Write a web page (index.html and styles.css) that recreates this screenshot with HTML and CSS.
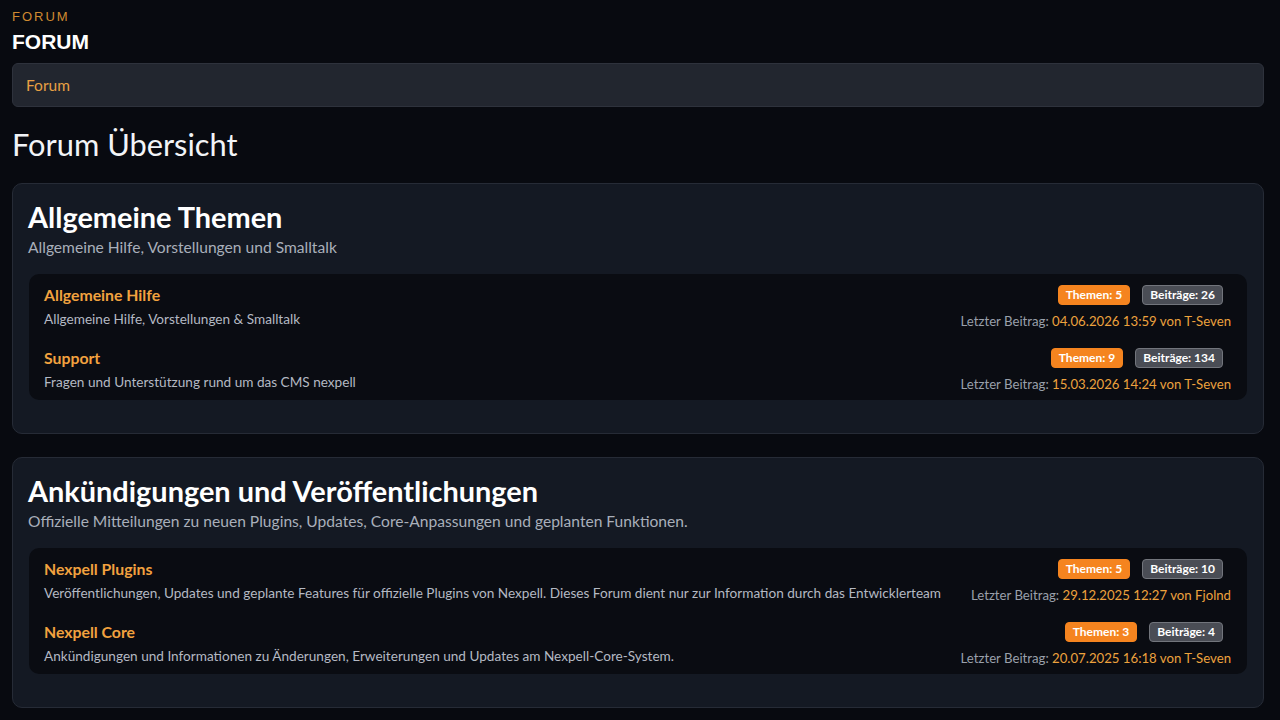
FILE: index.html
```html
<!DOCTYPE html>
<html lang="de">
<head>
<meta charset="utf-8">
<title>Forum</title>
<link rel="stylesheet" href="styles.css">
</head>
<body>
<div class="page">
  <div class="kicker">FORUM</div>
  <h1 class="page-title">FORUM</h1>
  <nav class="crumbs"><a href="#" class="crumb">Forum</a></nav>
  <h2 class="overview">Forum Übersicht</h2>

  <section class="card">
    <h3 class="cat-title">Allgemeine Themen</h3>
    <p class="cat-desc">Allgemeine Hilfe, Vorstellungen und Smalltalk</p>
    <div class="boards">
      <div class="board">
        <div class="board-main">
          <a href="#" class="board-name">Allgemeine Hilfe</a>
          <div class="board-desc">Allgemeine Hilfe, Vorstellungen &amp; Smalltalk</div>
        </div>
        <div class="board-meta">
          <div class="badges"><span class="badge badge-orange">Themen: 5</span><span class="badge badge-gray">Beiträge: 26</span></div>
          <div class="last">Letzter Beitrag: <span class="hl">04.06.2026 13:59 von T-Seven</span></div>
        </div>
      </div>
      <div class="board">
        <div class="board-main">
          <a href="#" class="board-name">Support</a>
          <div class="board-desc">Fragen und Unterstützung rund um das CMS nexpell</div>
        </div>
        <div class="board-meta">
          <div class="badges"><span class="badge badge-orange">Themen: 9</span><span class="badge badge-gray">Beiträge: 134</span></div>
          <div class="last">Letzter Beitrag: <span class="hl">15.03.2026 14:24 von T-Seven</span></div>
        </div>
      </div>
    </div>
  </section>

  <section class="card">
    <h3 class="cat-title">Ankündigungen und Veröffentlichungen</h3>
    <p class="cat-desc">Offizielle Mitteilungen zu neuen Plugins, Updates, Core-Anpassungen und geplanten Funktionen.</p>
    <div class="boards">
      <div class="board">
        <div class="board-main">
          <a href="#" class="board-name">Nexpell Plugins</a>
          <div class="board-desc">Veröffentlichungen, Updates und geplante Features für offizielle Plugins von Nexpell. Dieses Forum dient nur zur Information durch das Entwicklerteam</div>
        </div>
        <div class="board-meta">
          <div class="badges"><span class="badge badge-orange">Themen: 5</span><span class="badge badge-gray">Beiträge: 10</span></div>
          <div class="last">Letzter Beitrag: <span class="hl">29.12.2025 12:27 von Fjolnd</span></div>
        </div>
      </div>
      <div class="board">
        <div class="board-main">
          <a href="#" class="board-name">Nexpell Core</a>
          <div class="board-desc">Ankündigungen und Informationen zu Änderungen, Erweiterungen und Updates am Nexpell-Core-System.</div>
        </div>
        <div class="board-meta">
          <div class="badges"><span class="badge badge-orange">Themen: 3</span><span class="badge badge-gray">Beiträge: 4</span></div>
          <div class="last">Letzter Beitrag: <span class="hl">20.07.2025 16:18 von T-Seven</span></div>
        </div>
      </div>
    </div>
  </section>
</div>
</body>
</html>
```

FILE: styles.css
```css
* { box-sizing: border-box; }
html, body {
  margin: 0;
  padding: 0;
  background: #080a10;
  color: #eef0f4;
  font-family: Lato, "Open Sans", sans-serif;
}
.page {
  padding: 9px 16px 0 12px;
}
.kicker {
  font: 13px/15px "Liberation Sans", Arial, sans-serif;
  letter-spacing: 2px;
  color: #d08a30;
}
.page-title {
  margin: 6px 0 0;
  font: bold 21px/24px "Liberation Sans", Arial, sans-serif;
  color: #ffffff;
}
.crumbs {
  margin-top: 9px;
  height: 44px;
  padding: 0 13px;
  display: flex;
  align-items: center;
  background: #22262f;
  border: 1px solid #2e323c;
  border-radius: 6px;
}
.crumb {
  color: #e8a043;
  text-decoration: none;
  font-size: 15.5px;
}
.overview {
  margin: 18px 0 0;
  font-size: 30.8px;
  line-height: 40px;
  font-weight: 400;
  color: #f2f4f7;
}
.card {
  margin-top: 18px;
  margin-bottom: 23px;
  background: #141923;
  border: 1px solid #262b36;
  border-radius: 10px;
  padding: 16px 16px 16px 15px;
}
.card + .card { margin-top: 0; }
.cat-title {
  margin: 0;
  font-size: 28.9px;
  line-height: 33px;
  font-weight: 700;
  color: #ffffff;
}
.cat-desc {
  margin: 3px 0 16px;
  font-size: 15.6px;
  line-height: 22px;
  color: #a9afba;
}
.boards {
  background: #0a0c12;
  border-radius: 10px;
  margin: 0 0 17px 1px;
}
.board {
  display: flex;
  justify-content: space-between;
  align-items: flex-start;
  padding: 11px 16px 6px 15px;
}
.board-main {
  display: flex;
  flex-direction: column;
  gap: 4px;
  min-width: 0;
}
.board-name {
  color: #f2a23f;
  font-weight: 700;
  font-size: 15.8px;
  line-height: 20px;
  text-decoration: none;
}
.board-desc {
  color: #b4b9c3;
  font-size: 13.6px;
  line-height: 20px;
  white-space: nowrap;
}
.board-meta {
  display: flex;
  flex-direction: column;
  align-items: flex-end;
  gap: 5px;
  flex-shrink: 0;
  padding-left: 20px;
}
.badges {
  display: flex;
  gap: 12px;
  margin-right: 8px;
}
.badge {
  display: inline-block;
  height: 20px;
  padding: 0 7px;
  border-radius: 4px;
  font-size: 12px;
  line-height: 18px;
  font-weight: 700;
  color: #ffffff;
  border: 1px solid transparent;
}
.badge-orange {
  background: #f5841f;
  border-color: #f5841f;
}
.badge-gray {
  background: #4a4d55;
  border-color: #72757c;
}
.last {
  color: #9aa0ab;
  font-size: 13.2px;
  line-height: 20px;
  padding-top: 1px;
}
.hl { color: #eda23e; }
```
